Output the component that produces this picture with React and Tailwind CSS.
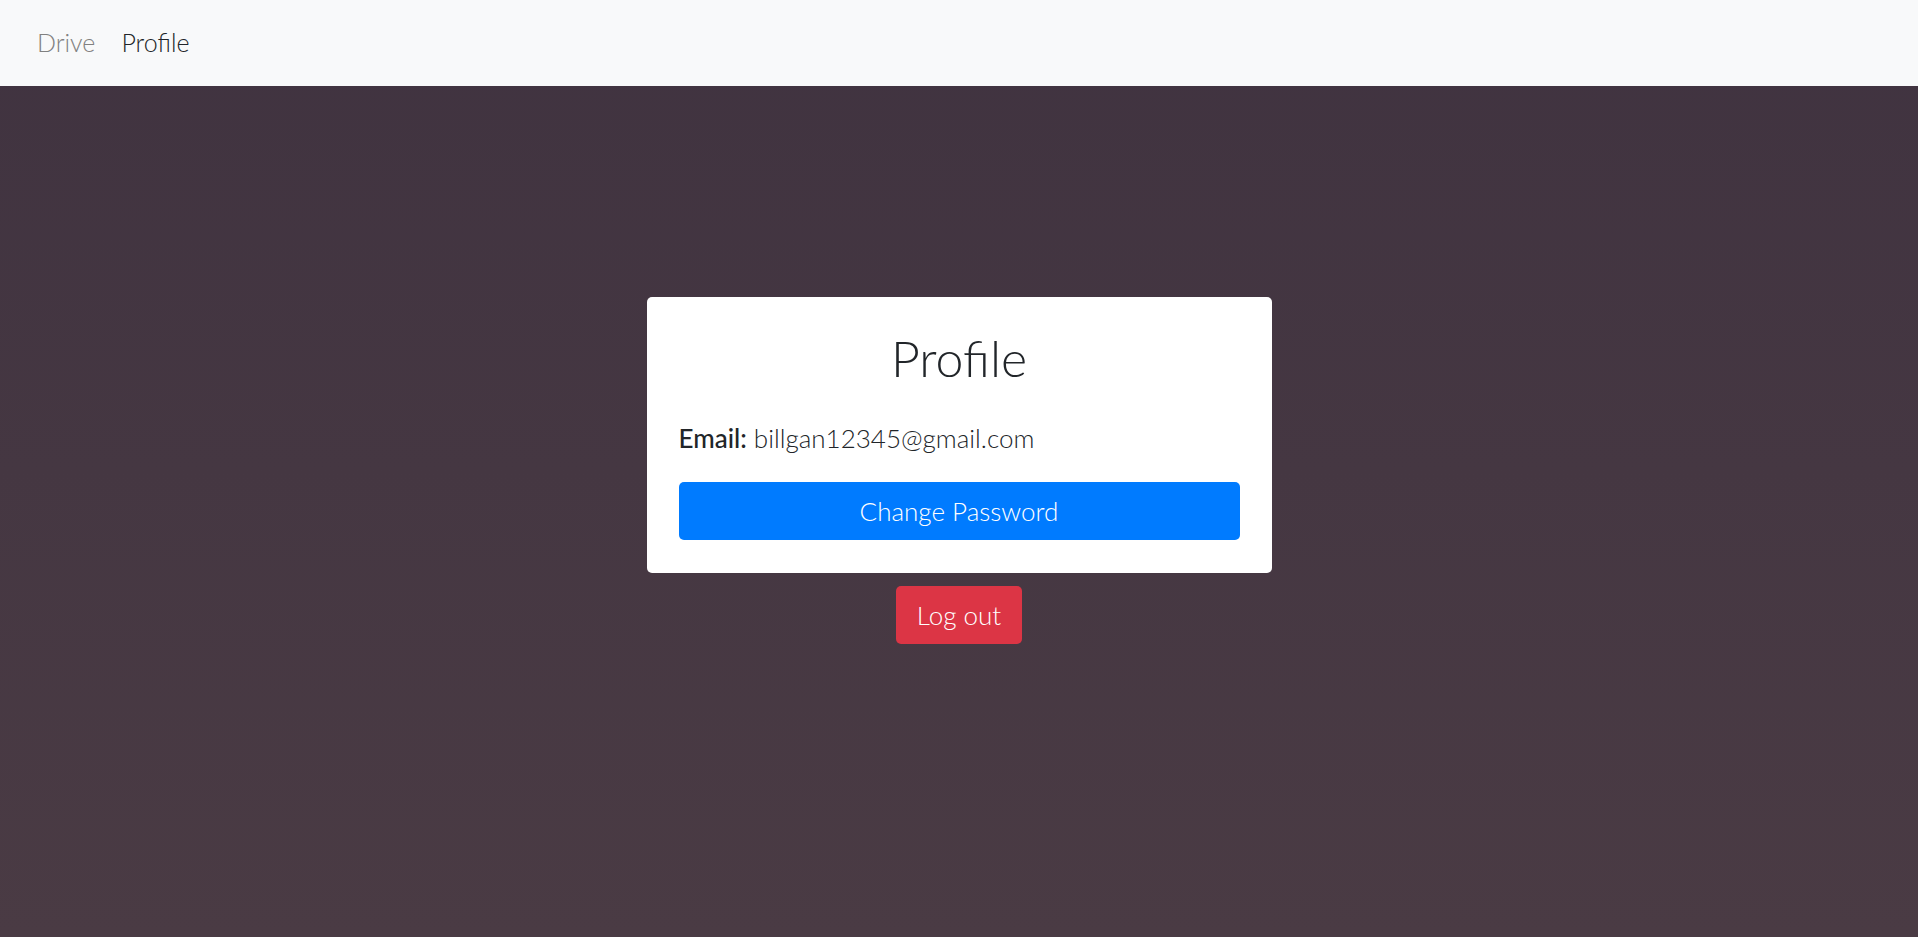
export default function App() {
  return (
    <div className="min-h-screen flex flex-col bg-gradient-to-b from-[#403340] to-[#4a3b44] font-['Source_Sans_Pro','Lato',sans-serif] font-light">
      <nav className="h-[86px] bg-[#f8f9fa] flex items-center px-[37px] gap-[26px] text-[25px]">
        <a className="text-[#808080]">Drive</a>
        <a className="text-[#212529]">Profile</a>
      </nav>

      <main className="flex-1 flex flex-col items-center pt-[211px]">
        <div className="w-[625px] bg-white rounded-[5px] px-[32px] pt-[31px] pb-[33px]">
          <h2 className="text-center text-[50px] leading-[60px] text-[#212529] mb-[34px]">Profile</h2>
          <p className="text-[26px] leading-[32px] text-[#212529]">
            <strong className="font-medium">Email:</strong> billgan12345@gmail.com
          </p>
          <button className="w-full h-[58px] mt-[28px] bg-[#007bff] text-white text-[26px] rounded-[5px]">
            Change Password
          </button>
        </div>

        <button className="mt-[13px] w-[126px] h-[58px] bg-[#dc3545] text-white text-[26px] rounded-[5px]">
          Log out
        </button>
      </main>
    </div>
  )
}
